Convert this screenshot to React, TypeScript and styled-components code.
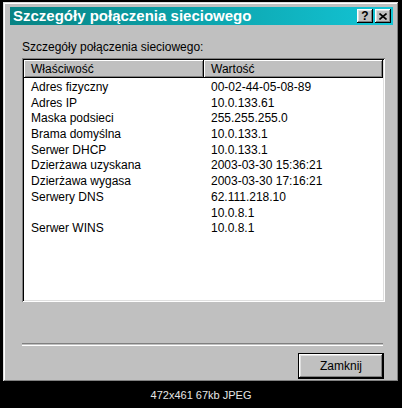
import React from "react";
import styled, { createGlobalStyle } from "styled-components";

const GlobalStyle = createGlobalStyle`
  html, body {
    margin: 0;
    padding: 0;
    background: #000;
  }
  body {
    width: 402px;
    height: 408px;
    overflow: hidden;
    font-family: "Liberation Sans", Arial, sans-serif;
  }
`;

const Page = styled.div`
  width: 402px;
  height: 408px;
  display: flex;
  flex-direction: column;
  background: #000;
`;

const Window = styled.div`
  margin: 2px 0 0 3px;
  width: 396px;
  height: 380px;
  box-sizing: border-box;
  padding: 5px 6px 0 7px;
  background: #c0c0c0;
  box-shadow: inset -1px -1px #000, inset 1px 1px #dfdfdf,
    inset -2px -2px #808080, inset 2px 2px #fff;
  display: flex;
  flex-direction: column;
`;

const TitleBar = styled.div`
  height: 18px;
  display: flex;
  align-items: center;
  justify-content: space-between;
  padding: 0 2px 0 3px;
  background: linear-gradient(to right, #078383, #13c5d6);
`;

const Title = styled.span`
  color: #fff;
  font-weight: bold;
  font-size: 15px;
  line-height: 18px;
  white-space: nowrap;
`;

const CaptionButtons = styled.div`
  display: flex;
  gap: 2px;
`;

const CaptionButton = styled.button`
  width: 16px;
  height: 14px;
  padding: 0;
  border: none;
  background: #c0c0c0;
  box-shadow: inset -1px -1px #000, inset 1px 1px #fff,
    inset -2px -2px #808080, inset 2px 2px #dfdfdf;
  display: flex;
  align-items: center;
  justify-content: center;
  font-family: "Liberation Sans", Arial, sans-serif;
  font-weight: bold;
  font-size: 12px;
  line-height: 14px;
  color: #000;
`;

const Content = styled.div`
  flex: 1;
  display: flex;
  flex-direction: column;
  padding: 15px 8px 0 12px;
`;

const Label = styled.div`
  font-size: 12px;
  line-height: 14px;
  height: 14px;
  color: #000;
`;

const ListBox = styled.div`
  margin-top: 4px;
  height: 244px;
  box-sizing: border-box;
  padding: 2px;
  background: #fff;
  box-shadow: inset 1px 1px #808080, inset -1px -1px #fff,
    inset 2px 2px #000, inset -2px -2px #dfdfdf;
`;

const Columns = styled.div`
  display: grid;
  grid-template-columns: 180px 1fr;
`;

const HeaderCell = styled.div`
  height: 18px;
  line-height: 18px;
  padding-left: 7px;
  font-size: 12px;
  color: #000;
  background: #c0c0c0;
  box-shadow: inset -1px -1px #000, inset 1px 1px #fff,
    inset -2px -2px #808080;
`;

const Rows = styled.div`
  padding-top: 2px;
`;

const Cell = styled.div`
  height: 15.7px;
  line-height: 15.7px;
  padding-left: 7px;
  font-size: 12px;
  color: #000;
  white-space: nowrap;
`;

const Separator = styled.div`
  margin: 41px 2px 0 0;
  height: 1px;
  border-top: 1px solid #808080;
  border-bottom: 1px solid #fff;
`;

const Footer = styled.div`
  display: flex;
  justify-content: flex-end;
  margin: 7px 1px 0 0;
`;

const PushButton = styled.button`
  width: 86px;
  height: 26px;
  padding: 0;
  border: 1px solid #000;
  background: #c0c0c0;
  box-shadow: inset -1px -1px #000, inset 1px 1px #fff,
    inset -2px -2px #808080, inset 2px 2px #dfdfdf;
  font-family: "Liberation Sans", Arial, sans-serif;
  font-size: 12px;
  color: #000;
`;

const Caption = styled.div`
  flex: 1;
  display: flex;
  align-items: center;
  justify-content: center;
  color: #e6e6e6;
  font-size: 11px;
`;

const details: [string, string][] = [
  ["Adres fizyczny", "00-02-44-05-08-89"],
  ["Adres IP", "10.0.133.61"],
  ["Maska podsieci", "255.255.255.0"],
  ["Brama domyślna", "10.0.133.1"],
  ["Serwer DHCP", "10.0.133.1"],
  ["Dzierżawa uzyskana", "2003-03-30 15:36:21"],
  ["Dzierżawa wygasa", "2003-03-30 17:16:21"],
  ["Serwery DNS", "62.111.218.10"],
  ["", "10.0.8.1"],
  ["Serwer WINS", "10.0.8.1"],
];

const CloseGlyph = () => (
  <svg width="8" height="7" viewBox="0 0 8 7">
    <path d="M0.5 0.5 L7.5 6.5 M7.5 0.5 L0.5 6.5" stroke="#000" strokeWidth="1.6" />
  </svg>
);

const App: React.FC = () => {
  return (
    <Page>
      <GlobalStyle />
      <Window>
        <TitleBar>
          <Title>Szczegóły połączenia sieciowego</Title>
          <CaptionButtons>
            <CaptionButton>?</CaptionButton>
            <CaptionButton>
              <CloseGlyph />
            </CaptionButton>
          </CaptionButtons>
        </TitleBar>
        <Content>
          <Label>Szczegóły połączenia sieciowego:</Label>
          <ListBox>
            <Columns>
              <HeaderCell>Właściwość</HeaderCell>
              <HeaderCell>Wartość</HeaderCell>
            </Columns>
            <Rows>
              {details.map(([name, value], i) => (
                <Columns key={i}>
                  <Cell>{name}</Cell>
                  <Cell>{value}</Cell>
                </Columns>
              ))}
            </Rows>
          </ListBox>
          <Separator />
          <Footer>
            <PushButton>Zamknij</PushButton>
          </Footer>
        </Content>
      </Window>
      <Caption>472x461 67kb JPEG</Caption>
    </Page>
  );
};

export default App;
